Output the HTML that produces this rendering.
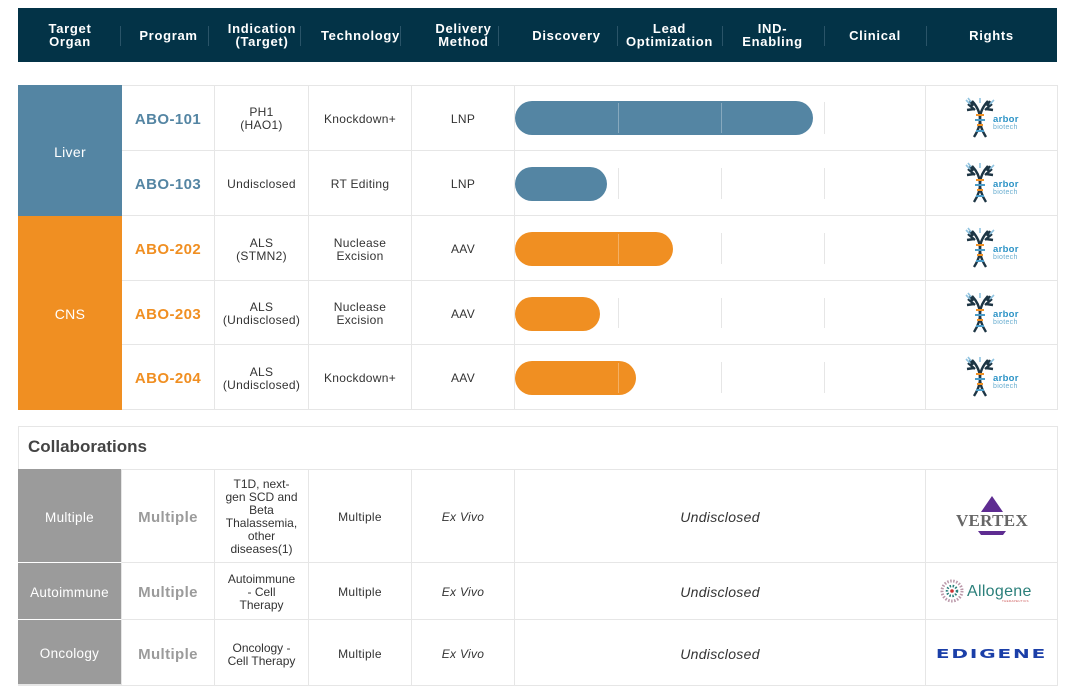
<!DOCTYPE html>
<html><head><meta charset="utf-8"><style>
body{margin:0;width:1080px;height:696px;background:#fff;font-family:"Liberation Sans",sans-serif;position:relative;overflow:hidden}
.a{position:absolute;box-sizing:border-box}
.hd{left:18px;top:8px;width:1039px;height:54px;background:#033347}
.ht{position:absolute;top:8px;height:54px;display:flex;align-items:center;justify-content:center;text-align:center;color:#fff;font-weight:bold;font-size:13px;line-height:13px;letter-spacing:.7px}
.hs{position:absolute;top:26px;width:1px;height:20px;background:#2a5468}
.c{position:absolute;display:flex;align-items:center;justify-content:center;text-align:center;font-size:12px;letter-spacing:.3px;color:#333;line-height:13px;padding-top:3px;box-sizing:border-box;border-right:1px solid #e6e6e6;border-bottom:1px solid #e6e6e6}
.p{font-weight:bold;font-size:15px;letter-spacing:.4px}
.bar{position:absolute;height:34px;border-radius:17px}
.vl{position:absolute;width:1px;background:#e6e6e6}
</style></head><body>
<div class="a hd"></div>
<div class="ht" style="left:18px;width:104px">Target<br>Organ</div>
<div class="ht" style="left:122px;width:93px">Program</div>
<div class="ht" style="left:215px;width:94px">Indication<br>(Target)</div>
<div class="ht" style="left:309px;width:103px">Technology</div>
<div class="ht" style="left:412px;width:103px">Delivery<br>Method</div>
<div class="ht" style="left:515px;width:103px">Discovery</div>
<div class="ht" style="left:618px;width:103px">Lead<br>Optimization</div>
<div class="ht" style="left:721px;width:103px">IND-<br>Enabling</div>
<div class="ht" style="left:824px;width:102px">Clinical</div>
<div class="ht" style="left:926px;width:131px">Rights</div>
<div class="hs" style="left:120px"></div><div class="hs" style="left:208px"></div><div class="hs" style="left:300px"></div><div class="hs" style="left:400px"></div><div class="hs" style="left:498px"></div><div class="hs" style="left:617px"></div><div class="hs" style="left:722px"></div><div class="hs" style="left:824px"></div><div class="hs" style="left:926px"></div>

<div class="a" style="left:18px;top:85px;width:1040px;height:325px;border:1px solid #e6e6e6"></div>
<div class="c" style="left:18px;top:85px;width:104px;height:131px;background:#5485a3;color:#fff;font-size:14px;border:none">Liver</div>
<div class="c" style="left:18px;top:216px;width:104px;height:194px;background:#f08f22;color:#fff;font-size:14px;border:none">CNS</div>

<div id="rows"></div>
<script>
const rows=[["ABO-101","PH1<br>(HAO1)","Knockdown+","LNP",298,"#5485a3"],
["ABO-103","Undisclosed","RT Editing","LNP",92,"#5485a3"],
["ABO-202","ALS<br>(STMN2)","Nuclease<br>Excision","AAV",158,"#f08f22"],
["ABO-203","ALS<br>(Undisclosed)","Nuclease<br>Excision","AAV",85,"#f08f22"],
["ABO-204","ALS<br>(Undisclosed)","Knockdown+","AAV",121,"#f08f22"]];
const tops=[85,151,216,281,345,410];
let h="";
const logo=`<svg width="54" height="42" viewBox="0 0 54 42"><g stroke="#1d3544" stroke-width="2.4" fill="none"><path d="M7 4 Q22 20 9 40"/><path d="M23 4 Q8 20 21 40"/><path d="M3 7 L10 13 M27 7 L20 13 M2 13 L9 12 M28 13 L21 12 M5 4 L8 9 M25 4 L22 9"/></g><g stroke="#8fc3e0" stroke-width="1.6"><path d="M1 3 L5 7 M29 3 L25 7 M15 1 L15 6 M3 1 L6 5"/></g><g stroke="#f08f22" stroke-width="2"><path d="M11 18 L19 18 M12 28 L18 28"/></g><g stroke="#4a9cc8" stroke-width="2"><path d="M10 23 L20 23 M11 34 L19 34"/></g><text x="28" y="25" font-family="Liberation Sans" font-size="9.5" fill="#2c93c6" font-weight="bold">arbor</text><text x="28" y="32" font-family="Liberation Sans" font-size="7" fill="#6aaed0">biotech</text></svg>`;
rows.forEach((r,i)=>{const t=tops[i],hh=tops[i+1]-t;
h+=`<div class="c p" style="left:122px;top:${t}px;width:93px;height:${hh}px;color:${r[5]}">${r[0]}</div>`;
h+=`<div class="c" style="left:215px;top:${t}px;width:94px;height:${hh}px">${r[1]}</div>`;
h+=`<div class="c" style="left:309px;top:${t}px;width:103px;height:${hh}px">${r[2]}</div>`;
h+=`<div class="c" style="left:412px;top:${t}px;width:103px;height:${hh}px">${r[3]}</div>`;
h+=`<div class="c" style="left:515px;top:${t}px;width:411px;height:${hh}px;border-right:1px solid #e6e6e6"></div>`;
[618,721,824].forEach(x=>h+=`<div class="vl" style="left:${x}px;top:${t+17}px;height:${hh-34}px"></div>`);
h+=`<div class="bar" style="left:515px;top:${t+16}px;width:${r[4]}px;background:${r[5]}"></div>`;
[618,721].forEach(x=>{if(x<515+r[4]-10)h+=`<div class="vl" style="left:${x}px;top:${t+18}px;height:30px;background:rgba(255,255,255,.3)"></div>`});
h+=`<div class="c" style="left:926px;top:${t}px;width:132px;height:${hh}px;border-right:none;padding-top:0">${logo}</div>`;});
document.getElementById("rows").innerHTML=h;
</script>

<div class="a" style="left:18px;top:426px;width:1040px;height:260px;border:1px solid #e6e6e6"></div>
<div class="a" style="left:28px;top:437px;font-size:17px;font-weight:bold;color:#444">Collaborations</div>
<div class="a" style="left:18px;top:469px;width:1040px;height:1px;background:#e6e6e6"></div>

<div class="c" style="left:18px;top:469px;width:104px;height:94px;background:#9b9b9b;color:#fff;font-size:13.5px;border-bottom:1px solid #fff">Multiple</div>
<div class="c" style="left:18px;top:563px;width:104px;height:57px;background:#9b9b9b;color:#fff;font-size:13.5px;border-bottom:1px solid #fff">Autoimmune</div>
<div class="c" style="left:18px;top:620px;width:104px;height:65px;background:#9b9b9b;color:#fff;font-size:13.5px">Oncology</div>

<div class="c p" style="left:122px;top:469px;width:93px;height:94px;color:#9b9b9b">Multiple</div>
<div class="c p" style="left:122px;top:563px;width:93px;height:57px;color:#9b9b9b">Multiple</div>
<div class="c p" style="left:122px;top:620px;width:93px;height:66px;color:#9b9b9b;border-bottom:none">Multiple</div>

<div class="c" style="left:215px;top:469px;width:94px;height:94px;letter-spacing:0">T1D, next-<br>gen SCD and<br>Beta<br>Thalassemia,<br>other<br>diseases(1)</div>
<div class="c" style="left:215px;top:563px;width:94px;height:57px;letter-spacing:0">Autoimmune<br>- Cell<br>Therapy</div>
<div class="c" style="left:215px;top:620px;width:94px;height:66px;border-bottom:none;letter-spacing:0">Oncology -<br>Cell Therapy</div>

<div class="c" style="left:309px;top:469px;width:103px;height:94px">Multiple</div>
<div class="c" style="left:309px;top:563px;width:103px;height:57px">Multiple</div>
<div class="c" style="left:309px;top:620px;width:103px;height:66px;border-bottom:none">Multiple</div>

<div class="c" style="left:412px;top:469px;width:103px;height:94px;font-style:italic">Ex Vivo</div>
<div class="c" style="left:412px;top:563px;width:103px;height:57px;font-style:italic">Ex Vivo</div>
<div class="c" style="left:412px;top:620px;width:103px;height:66px;font-style:italic;border-bottom:none">Ex Vivo</div>

<div class="c" style="left:515px;top:469px;width:411px;height:94px;font-style:italic;font-size:14px">Undisclosed</div>
<div class="c" style="left:515px;top:563px;width:411px;height:57px;font-style:italic;font-size:14px">Undisclosed</div>
<div class="c" style="left:515px;top:620px;width:411px;height:66px;font-style:italic;font-size:14px;border-bottom:none">Undisclosed</div>

<div class="c" style="left:926px;top:469px;width:132px;height:94px;border-right:none;padding-top:0"><svg width="80" height="44" viewBox="0 0 80 44"><polygon points="40,2 51,18 29,18" fill="#5e2c91"/><text x="40" y="32" text-anchor="middle" font-family="Liberation Serif" font-size="17" font-weight="bold" fill="#666">VERTEX</text><polygon points="26,37 54,37 51,41 29,41" fill="#5e2c91"/></svg></div>
<div class="c" style="left:926px;top:563px;width:132px;height:57px;border-right:none;padding-top:0"><svg width="104" height="26" viewBox="0 0 104 26"><circle cx="12" cy="13" r="10" fill="none" stroke="#b9a" stroke-width="3" stroke-dasharray="1.5 1.5"/><circle cx="12" cy="13" r="5" fill="none" stroke="#2a7f7a" stroke-width="2.5" stroke-dasharray="1.5 1.5"/><circle cx="12" cy="13" r="1.8" fill="#c33"/><text x="27" y="18" font-family="Liberation Sans" font-size="16" fill="#2a7f7a">Allogene</text><text x="62" y="24" font-family="Liberation Sans" font-size="3" fill="#c55">THERAPEUTICS</text></svg></div>
<div class="c" style="left:926px;top:620px;width:132px;height:66px;border-right:none;border-bottom:none;padding-top:0"><span style="font-family:'DejaVu Sans',sans-serif;font-weight:bold;color:#1b3fa8;font-size:16px;letter-spacing:1.5px;transform:scaleX(1.25) scaleY(.8);display:inline-block">EDIGENE</span></div>
</body></html>
